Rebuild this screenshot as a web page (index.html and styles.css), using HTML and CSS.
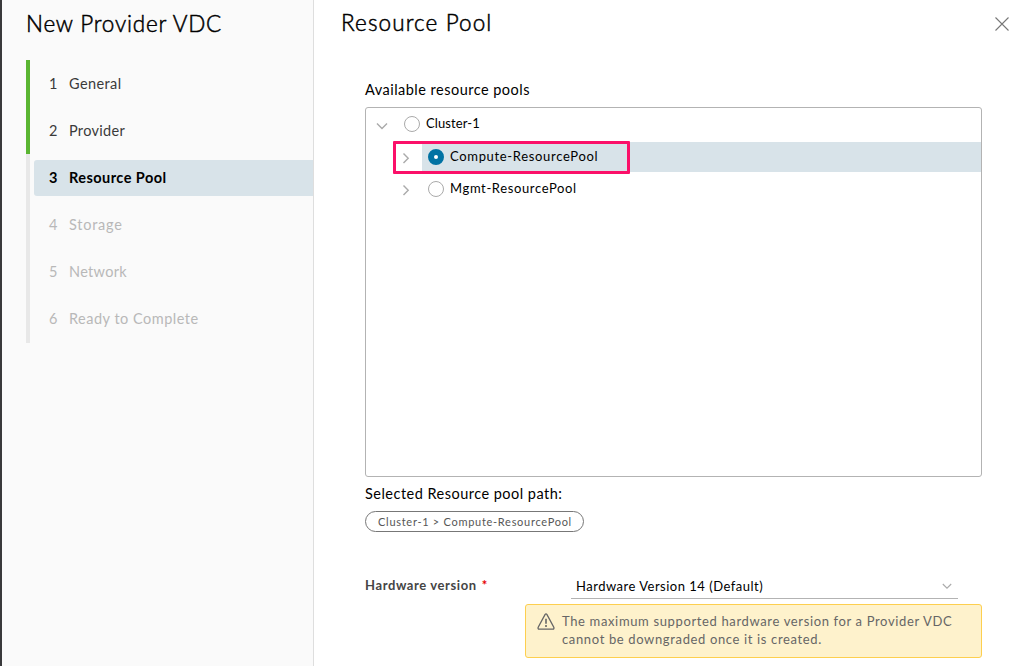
FILE: index.html
```html
<!DOCTYPE html>
<html lang="en">
<head>
<meta charset="utf-8">
<title>New Provider VDC</title>
<link rel="stylesheet" href="styles.css">
</head>
<body>
<div class="wizard">
  <aside class="sidebar">
    <h1 class="wizard-title"><span>New Provider VDC</span></h1>
    <ol class="steps">
      <li class="step done"><div class="step-box"><span class="num">1</span><span class="t-general">General</span></div></li>
      <li class="step done"><div class="step-box"><span class="num">2</span><span class="t-provider">Provider</span></div></li>
      <li class="step current"><div class="step-box"><span class="num">3</span><span class="t-pool">Resource Pool</span></div></li>
      <li class="step"><div class="step-box"><span class="num">4</span><span class="t-storage">Storage</span></div></li>
      <li class="step"><div class="step-box"><span class="num">5</span><span class="t-network">Network</span></div></li>
      <li class="step last"><div class="step-box"><span class="num">6</span><span class="t-ready">Ready to Complete</span></div></li>
    </ol>
  </aside>
  <main class="content">
    <header class="page-header">
      <h2 class="page-title"><span>Resource Pool</span></h2>
      <svg class="close" width="16" height="16" viewBox="0 0 16 16"><path d="M1.5 1.5 14.5 14.5M14.5 1.5 1.5 14.5"/></svg>
    </header>
    <section class="form">
      <div class="label"><span class="t-avail">Available resource pools</span></div>
      <div class="tree">
        <div class="node root">
          <svg class="caret" width="16" height="16" viewBox="0 0 16 16"><path d="M3 5.5 8 10.5 13 5.5"/></svg>
          <div class="node-body"><i class="radio"></i><span class="t-cluster">Cluster-1</span></div>
        </div>
        <div class="node child selected">
          <svg class="caret" width="16" height="16" viewBox="0 0 16 16"><path d="M5.5 2.5 10.2 7.3 5.5 12.1"/></svg>
          <div class="node-body"><i class="radio checked"></i><span class="t-compute">Compute-ResourcePool</span></div>
          <div class="highlight"></div>
        </div>
        <div class="node child">
          <svg class="caret" width="16" height="16" viewBox="0 0 16 16"><path d="M5.5 2.5 10.2 7.3 5.5 12.1"/></svg>
          <div class="node-body"><i class="radio"></i><span class="t-mgmt">Mgmt-ResourcePool</span></div>
        </div>
      </div>
      <div class="label path-label"><span class="t-path">Selected Resource pool path:</span></div>
      <div class="pill"><span class="t-pill">Cluster-1 &gt; Compute-ResourcePool</span></div>
      <div class="hardware">
        <div class="hw-label"><span class="t-hw">Hardware version</span><span class="required">*</span></div>
        <div class="select"><span class="t-select">Hardware Version 14 (Default)</span>
          <svg class="select-caret" width="12" height="12" viewBox="0 0 12 12"><path d="M1.8 4 6 8.2 10.2 4"/></svg>
        </div>
      </div>
      <div class="alert">
        <svg class="warn" width="18" height="18" viewBox="0 0 18 18"><path d="M8 1.7Q9 .2 10 1.7L16.8 14.2Q17.4 16 15.8 16.2H2.2Q.6 16 1.2 14.2Z"/><path class="mark" d="M9 5.7V10.7M9 12.1V13.9"/></svg>
        <p class="alert-text"><span class="t-a1">The maximum supported hardware version for a Provider VDC</span><br><span class="t-a2">cannot be downgraded once it is created.</span></p>
      </div>
    </section>
  </main>
</div>
</body>
</html>
```

FILE: styles.css
```css
* { box-sizing: border-box; }
body { margin: 0; background: #fff; font-family: Lato, "Noto Sans", sans-serif; font-size: 14.5px; color: #000; }
span { white-space: nowrap; }
.wizard { display: flex; width: 1030px; height: 666px; overflow: hidden; border-left: 2px solid #39393b; }
.sidebar { width: 312px; background: #fafafa; border-right: 1px solid #dedede; padding-left: 24px; }
.wizard-title, .page-title { margin: 0; font-size: 22.5px; font-weight: 300; line-height: 28px; -webkit-text-stroke: 0.5px #000; }
.wizard-title { height: 60px; padding-top: 10px; letter-spacing: 0.77px; }
.steps { list-style: none; margin: 0; padding: 0; }
.step { height: 47px; padding: 6px 0 5px 4px; border-left: 4px solid #e8e8e8; color: #b8b8b8; }
.step.last { height: 48px; }
.step.done { border-left-color: #5ab532; color: #3a3a3a; }
.step.current { color: #000; font-weight: 700; }
.step-box { height: 36px; display: flex; align-items: center; padding: 0 0 2px 15px; border-radius: 3px 0 0 3px; letter-spacing: 0.4px; }
.current .step-box { background: #d8e3e9; }
.num { width: 20px; }
.t-general { letter-spacing: 0.4px; }
.t-provider, .t-network { letter-spacing: 0.3px; }
.t-pool { letter-spacing: 0.45px; }
.t-storage { letter-spacing: 0.75px; }
.t-ready { letter-spacing: 0.5px; }
.content { flex: 1; padding-left: 27px; }
.page-header { display: flex; justify-content: space-between; height: 82px; padding: 8px 20px 0 0; }
.page-title { padding-top: 1px; letter-spacing: 1.1px; }
.close { margin-top: 8px; fill: none; stroke: #777; stroke-width: 1.1; }
.form { width: 641px; padding-left: 24px; }
.label { height: 25px; line-height: 15px; letter-spacing: 0.48px; }
.tree { height: 370px; border: 1px solid #b3b3b3; border-radius: 3px; padding-top: 1px; font-size: 13px; }
.node { position: relative; display: flex; align-items: center; height: 30px; margin-bottom: 2px; }
.node.root { padding-left: 8px; margin-bottom: 3px; }
.node.child { padding-left: 32px; }
.caret { margin-top: 3px; fill: none; stroke: #aaa; stroke-width: 1.4; }
.node-body { display: flex; flex: 1; align-items: center; height: 30px; margin-left: 8px; padding-left: 6px; }
.node-body span { padding-bottom: 2px; }
.t-cluster { letter-spacing: 0.1px; }
.t-compute { letter-spacing: 0.67px; }
.t-mgmt { letter-spacing: 0.63px; }
.selected .node-body { background: #d8e3e9; }
.radio { width: 16px; height: 16px; margin-right: 6px; border: 1px solid #aaa; border-radius: 50%; background: #fff; }
.radio.checked { border: 6px solid #0072a3; }
.highlight { position: absolute; left: 27px; top: -1px; width: 237px; height: 33px; border: 3px solid #fb1069; border-radius: 1px; }
.path-label { height: 34px; padding-top: 9px; }
.pill { display: flex; align-items: center; width: 219px; height: 21px; padding-left: 12px; border: 1px solid #777; border-radius: 11px; color: #565656; font-size: 11px; letter-spacing: 0.72px; }
.hardware { display: flex; height: 72px; padding-top: 43px; }
.hw-label { width: 206px; height: 24px; line-height: 20px; font-size: 13px; font-weight: 700; color: #454545; }
.t-hw { letter-spacing: 0.6px; }
.required { margin-left: 5px; color: #e60000; }
.select { display: flex; justify-content: space-between; align-items: center; width: 387px; height: 24px; padding: 0 5px 1px; border-bottom: 1px solid #b3b3b3; font-size: 13px; letter-spacing: 0.5px; }
.select-caret { fill: none; stroke: #aaa; stroke-width: 1.1; }
.alert { display: flex; width: 457px; height: 54px; margin-left: 160px; padding: 8px 0 0 11px; border: 1px solid #fdcf4f; border-radius: 3px; background: #fef2cc; color: #666; }
.warn { flex: none; margin-right: 7px; fill: none; stroke: #666; stroke-width: 1.3; }
.mark { stroke-width: 1.6; }
.alert-text { margin: -1px 0 0; font-size: 13px; line-height: 18px; letter-spacing: 0.64px; }
```
